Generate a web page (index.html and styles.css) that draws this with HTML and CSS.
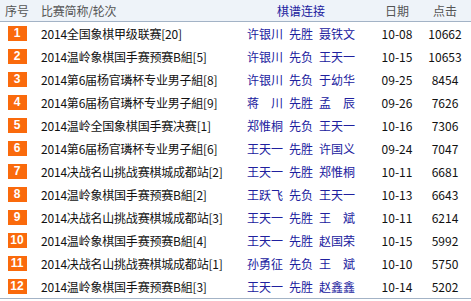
FILE: index.html
```html
<!DOCTYPE html>
<html lang="zh-CN">
<head>
<meta charset="utf-8">
<title>棋谱</title>
<link rel="stylesheet" href="styles.css">
</head>
<body>
<div class="list">
  <div class="row head">
    <div class="c-no">序号</div>
    <div class="c-title">比赛简称/轮次</div>
    <div class="c-game">棋谱连接</div>
    <div class="c-date">日期</div>
    <div class="c-hits">点击</div>
  </div>
  <div class="row"><div class="c-no"><span class="badge">1</span></div><div class="c-title">2014全国象棋甲级联赛[20]</div><div class="c-game"><span class="nm">许银川</span><span>先胜</span><span class="nm">聂铁文</span></div><div class="c-date">10-08</div><div class="c-hits">10662</div></div>
  <div class="row"><div class="c-no"><span class="badge">2</span></div><div class="c-title">2014温岭象棋国手赛预赛B組[5]</div><div class="c-game"><span class="nm">许银川</span><span>先负</span><span class="nm">王天一</span></div><div class="c-date">10-15</div><div class="c-hits">10653</div></div>
  <div class="row"><div class="c-no"><span class="badge">3</span></div><div class="c-title">2014第6届杨官璘杯专业男子組[8]</div><div class="c-game"><span class="nm">许银川</span><span>先负</span><span class="nm">于幼华</span></div><div class="c-date">09-25</div><div class="c-hits">8454</div></div>
  <div class="row"><div class="c-no"><span class="badge">4</span></div><div class="c-title">2014第6届杨官璘杯专业男子組[9]</div><div class="c-game"><span class="nm sp">蒋川</span><span>先胜</span><span class="nm sp">孟辰</span></div><div class="c-date">09-26</div><div class="c-hits">7626</div></div>
  <div class="row"><div class="c-no"><span class="badge">5</span></div><div class="c-title">2014温岭全国象棋国手赛决赛[1]</div><div class="c-game"><span class="nm">郑惟桐</span><span>先负</span><span class="nm">王天一</span></div><div class="c-date">10-16</div><div class="c-hits">7306</div></div>
  <div class="row"><div class="c-no"><span class="badge">6</span></div><div class="c-title">2014第6届杨官璘杯专业男子組[6]</div><div class="c-game"><span class="nm">王天一</span><span>先胜</span><span class="nm">许国义</span></div><div class="c-date">09-24</div><div class="c-hits">7047</div></div>
  <div class="row"><div class="c-no"><span class="badge">7</span></div><div class="c-title">2014决战名山挑战赛棋城成都站[2]</div><div class="c-game"><span class="nm">王天一</span><span>先胜</span><span class="nm">郑惟桐</span></div><div class="c-date">10-11</div><div class="c-hits">6681</div></div>
  <div class="row"><div class="c-no"><span class="badge">8</span></div><div class="c-title">2014温岭象棋国手赛预赛B組[2]</div><div class="c-game"><span class="nm">王跃飞</span><span>先负</span><span class="nm">王天一</span></div><div class="c-date">10-13</div><div class="c-hits">6643</div></div>
  <div class="row"><div class="c-no"><span class="badge">9</span></div><div class="c-title">2014决战名山挑战赛棋城成都站[3]</div><div class="c-game"><span class="nm">王天一</span><span>先胜</span><span class="nm sp">王斌</span></div><div class="c-date">10-11</div><div class="c-hits">6214</div></div>
  <div class="row"><div class="c-no"><span class="badge">10</span></div><div class="c-title">2014温岭象棋国手赛预赛B組[4]</div><div class="c-game"><span class="nm">王天一</span><span>先胜</span><span class="nm">赵国荣</span></div><div class="c-date">10-15</div><div class="c-hits">5992</div></div>
  <div class="row"><div class="c-no"><span class="badge">11</span></div><div class="c-title">2014决战名山挑战赛棋城成都站[1]</div><div class="c-game"><span class="nm">孙勇征</span><span>先负</span><span class="nm sp">王斌</span></div><div class="c-date">10-10</div><div class="c-hits">5750</div></div>
  <div class="row"><div class="c-no"><span class="badge">12</span></div><div class="c-title">2014温岭象棋国手赛预赛B組[3]</div><div class="c-game"><span class="nm">王天一</span><span>先胜</span><span class="nm">赵鑫鑫</span></div><div class="c-date">10-14</div><div class="c-hits">5202</div></div>
</div>
</body>
</html>
```
FILE: styles.css
```css
html, body {
  margin: 0;
  padding: 0;
  background: #ffffff;
}
body {
  font-family: "Noto Sans CJK SC", "Noto Sans", sans-serif;
  font-size: 12px;
  color: #111;
}
.list {
  width: 471px;
  border-bottom: 1px solid #a3b3c6;
}
.row {
  display: grid;
  grid-template-columns: 34px 201px 132px 60px 36px 8px;
  height: 23px;
  align-items: center;
  white-space: nowrap;
}
.row.head {
  height: 21px;
  background: #eef3f9;
  border-bottom: 1px solid #a3b3c6;
  color: #555;
}
.c-no {
  display: flex;
  justify-content: center;
}
.c-title {
  padding-left: 7px;
  letter-spacing: -0.2px;
}
.c-game {
  display: flex;
  justify-content: center;
  gap: 6px;
  color: #20209e;
}
.c-date, .c-hits {
  text-align: center;
}
.badge {
  display: inline-flex;
  align-items: center;
  justify-content: center;
  width: 19px;
  height: 15px;
  background: #fa6a0c;
  color: #fff;
  font-family: "Liberation Sans", Arial, sans-serif;
  font-weight: bold;
  font-size: 12px;
  line-height: 15px;
}
.nm {
  display: inline-block;
  width: 36px;
}
.nm.sp {
  text-align: justify;
  text-align-last: justify;
}
```
